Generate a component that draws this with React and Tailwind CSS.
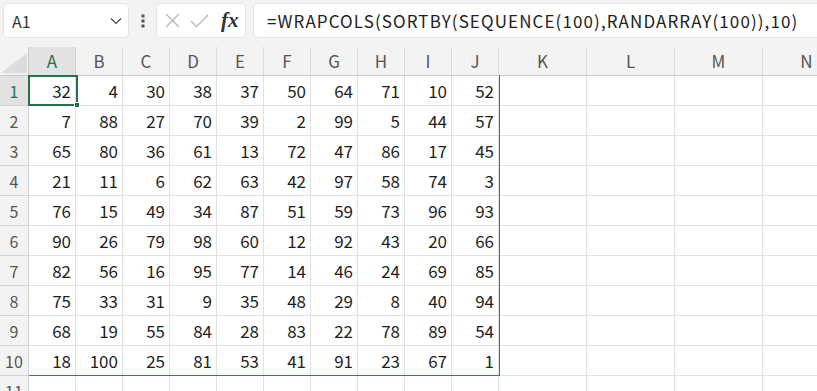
import React from "react";

const data = [
  [32, 4, 30, 38, 37, 50, 64, 71, 10, 52],
  [7, 88, 27, 70, 39, 2, 99, 5, 44, 57],
  [65, 80, 36, 61, 13, 72, 47, 86, 17, 45],
  [21, 11, 6, 62, 63, 42, 97, 58, 74, 3],
  [76, 15, 49, 34, 87, 51, 59, 73, 96, 93],
  [90, 26, 79, 98, 60, 12, 92, 43, 20, 66],
  [82, 56, 16, 95, 77, 14, 46, 24, 69, 85],
  [75, 33, 31, 9, 35, 48, 29, 8, 40, 94],
  [68, 19, 55, 84, 28, 83, 22, 78, 89, 54],
  [18, 100, 25, 81, 53, 41, 91, 23, 67, 1],
];

const cols = ["A", "B", "C", "D", "E", "F", "G", "H", "I", "J"];
const wide = ["K", "L", "M", "N"];

const font = { fontFamily: '"Noto Sans CJK JP", "Noto Sans", sans-serif' };

function Row({ n, values, selected }) {
  return (
    <div className="flex h-[30px] shrink-0">
      <div
        className={`w-[29px] shrink-0 flex items-center justify-center border-r border-b border-[#d4d4d4] text-[16px] ${
          selected ? "bg-[#e2e2e2] text-[#217346]" : "bg-[#f3f3f3] text-[#555]"
        }`}
      >
        {n}
      </div>
      {cols.map((c, i) => (
        <div
          key={c}
          className="w-[47px] shrink-0 flex items-center justify-end pr-[4px] border-r border-b border-[#e1e1e1] text-[17px] text-[#1f1f1f] bg-white"
        >
          {values ? values[i] : ""}
        </div>
      ))}
      {wide.map((c) => (
        <div key={c} className="w-[88px] shrink-0 border-r border-b border-[#e1e1e1] bg-white" />
      ))}
    </div>
  );
}

export default function App() {
  return (
    <div className="w-[817px] h-[391px] overflow-hidden bg-[#f3f3f3] flex flex-col" style={font}>
      {/* toolbar */}
      <div className="h-[47px] shrink-0 flex items-start pt-[3px] pl-[3px] gap-0">
        <div className="w-[126px] h-[35px] bg-white border border-[#e3e3e3] rounded-[5px] flex items-center justify-between pl-[8px] pr-[6px]">
          <span className="text-[16px] text-[#333]">A1</span>
          <svg width="12" height="8" viewBox="0 0 12 8">
            <path d="M1 1.5 L6 6.5 L11 1.5" fill="none" stroke="#444" strokeWidth="1.2" />
          </svg>
        </div>
        <div className="w-[27px] h-[35px] flex items-center justify-center">
          <svg width="4" height="14" viewBox="0 0 4 14">
            <rect x="0.5" y="0.5" width="3" height="3" fill="#555" />
            <rect x="0.5" y="5.5" width="3" height="3" fill="#555" />
            <rect x="0.5" y="10.5" width="3" height="3" fill="#555" />
          </svg>
        </div>
        <div className="w-[90px] h-[35px] bg-white border border-[#e3e3e3] rounded-[5px] flex items-center pl-[8px] gap-[10px]">
          <svg width="15" height="15" viewBox="0 0 15 15">
            <path d="M1 1 L14 14 M14 1 L1 14" stroke="#b8b8b8" strokeWidth="1.4" fill="none" />
          </svg>
          <svg width="19" height="15" viewBox="0 0 19 15">
            <path d="M1 8 L6.5 13.5 L18 2" stroke="#b8b8b8" strokeWidth="1.4" fill="none" />
          </svg>
          <span
            className="text-[21px] italic text-[#333] ml-[2px] leading-none"
            style={{ fontFamily: '"Liberation Serif", serif', fontWeight: 600 }}
          >
            fx
          </span>
        </div>
        <div className="ml-[7px] flex-1 h-[35px] bg-white border border-[#e3e3e3] rounded-l-[5px] border-r-0 flex items-center pl-[13px] overflow-hidden whitespace-nowrap">
          <span className="text-[17px] tracking-[1.1px] text-[#222]">
            =WRAPCOLS(SORTBY(SEQUENCE(100),RANDARRAY(100)),10)
          </span>
        </div>
      </div>

      {/* grid */}
      <div className="relative flex flex-col flex-1 overflow-hidden">
        {/* header */}
        <div className="flex h-[29px] shrink-0 bg-[#f3f3f3]">
          <div className="w-[29px] shrink-0 border-r border-b border-[#c8c8c8] flex items-end justify-end">
            <svg width="26" height="20" viewBox="0 0 26 20" className="mb-[2px] mr-[1px]">
              <polygon points="26,0 26,20 0,20" fill="#dcdcdc" />
            </svg>
          </div>
          {cols.map((c, i) => (
            <div
              key={c}
              className={`w-[47px] shrink-0 flex items-center justify-center border-r border-b text-[17px] ${
                i === 0
                  ? "bg-[#e2e2e2] text-[#217346] border-r-[#d4d4d4] border-b-[#c8c8c8]"
                  : "text-[#555] border-r-[#dadada] border-b-[#c8c8c8]"
              }`}
            >
              {c}
            </div>
          ))}
          {wide.map((c) => (
            <div
              key={c}
              className="w-[88px] shrink-0 flex items-center justify-center border-r border-b border-r-[#dadada] border-b-[#c8c8c8] text-[17px] text-[#555]"
            >
              {c}
            </div>
          ))}
        </div>

        {data.map((r, i) => (
          <Row key={i} n={i + 1} values={r} selected={i === 0} />
        ))}
        <Row n={11} />

        {/* spill range border */}
        <div className="absolute left-[499px] top-[28px] w-[1px] h-[301px] bg-[#1a6fe8] pointer-events-none" />
        <div className="absolute left-[29px] top-[328px] w-[471px] h-[1px] bg-[#1a6fe8] pointer-events-none" />
        {/* selection */}
        <div className="absolute left-[28px] top-[28px] w-[50px] h-[31px] border-2 border-[#217346] pointer-events-none" />
        <div className="absolute left-[74px] top-[55px] w-[6px] h-[6px] bg-[#217346] border border-white pointer-events-none" />
      </div>
    </div>
  );
}
